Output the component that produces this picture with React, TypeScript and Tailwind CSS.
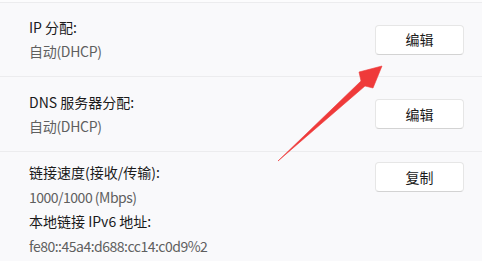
import React from 'react';

const font = { fontFamily: '"Noto Sans CJK SC", "Noto Sans", sans-serif' };

function Btn({ label }: { label: string }) {
  return (
    <button className="w-[89px] h-[30px] shrink-0 rounded-[4px] bg-white border border-[#e6e6e6] border-b-[#d3d3d3] text-[14px] text-[#1b1b1b] flex items-center justify-center">
      {label}
    </button>
  );
}

function App() {
  return (
    <div className="relative w-[482px] h-[261px] overflow-hidden bg-[#f9f9fb]" style={font}>
      <div className="h-[2px] bg-[#fcfcfd]" />
      {/* IP */}
      <div className="flex items-center justify-between border-t border-b border-[#ececee] pl-[29px] pr-[18px] h-[75px]">
        <div className="text-[14px] leading-[24px] -mt-[1px]">
          <div className="text-[#1b1b1b]">IP 分配:</div>
          <div className="text-[#5f5f5f] tracking-[-0.3px]">自动(DHCP)</div>
        </div>
        <Btn label="编辑" />
      </div>
      {/* DNS */}
      <div className="flex items-center justify-between border-b border-[#ececee] pl-[29px] pr-[18px] h-[75px]">
        <div className="text-[14px] leading-[24px]">
          <div className="text-[#1b1b1b]">DNS 服务器分配:</div>
          <div className="text-[#5f5f5f] tracking-[-0.3px]">自动(DHCP)</div>
        </div>
        <Btn label="编辑" />
      </div>
      {/* link */}
      <div className="flex items-start justify-between pl-[29px] pr-[18px]">
        <div className="text-[14px] leading-[24.5px] pt-[8px]">
          <div className="text-[#1b1b1b]">链接速度(接收/传输):</div>
          <div className="text-[#5f5f5f] tracking-[-0.5px]">1000/1000 (Mbps)</div>
          <div className="text-[#1b1b1b]">本地链接 IPv6 地址:</div>
          <div className="text-[#5f5f5f] tracking-[-0.5px]">fe80::45a4:d688:cc14:c0d9%2</div>
        </div>
        <div className="mt-[10px]">
          <Btn label="复制" />
        </div>
      </div>

      <svg className="absolute left-0 top-0 pointer-events-none" width="482" height="261" viewBox="0 0 482 261">
        <polygon
          points="278,161 361,81 359,72 382,66 373,88 365,86"
          fill="#ef3a3a"
          stroke="#ef3a3a"
          strokeWidth="0.6"
          strokeLinejoin="round"
        />
      </svg>
    </div>
  );
}

export default App;
